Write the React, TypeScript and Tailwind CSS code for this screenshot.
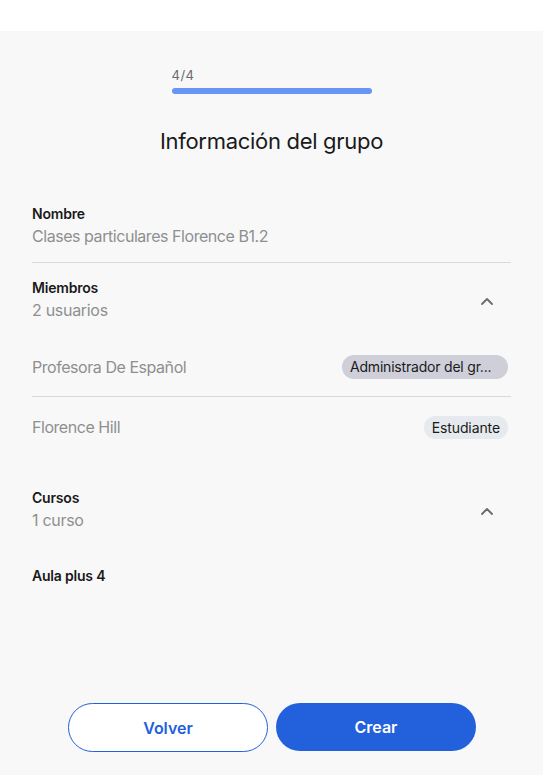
import React from "react";

function Chevron() {
  return (
    <svg width="14" height="10" viewBox="0 0 14 10" fill="none" className="text-[#6b6b6b]">
      <path d="M2 8 L7 3 L12 8" stroke="currentColor" strokeWidth="1.8" strokeLinecap="round" strokeLinejoin="round" />
    </svg>
  );
}

export default function App() {
  const font = { fontFamily: "Inter, 'Noto Sans', sans-serif" };
  return (
    <div className="w-[543px] h-[775px] flex flex-col bg-[#f8f8f8] text-[#1a1a1a]" style={font}>
      <div className="h-[31px] bg-white shrink-0" />
      <div className="flex-1 flex flex-col">
        <div className="flex flex-col items-center pt-[35px]">
          <div className="w-[200px]">
            <div className="text-[13px] leading-[18px] text-[#6b6b6b] tracking-[0.5px]">4/4</div>
            <div className="mt-[4px] h-[6px] w-full rounded-full bg-[#6695f7]" />
          </div>
          <h1 className="mt-[32px] text-[22px] leading-[30px] tracking-[-0.3px] text-[#1a1a1a]">Información del grupo</h1>
        </div>

        <div className="px-[32px] pt-[48px]">
          <div className="pb-[14px] border-b border-[#d9d9d9]">
            <div className="text-[14px] leading-[20px] font-semibold tracking-[-0.2px]">Nombre</div>
            <div className="text-[16px] leading-[24px] text-[#8f8f8f] tracking-[-0.45px]">Clases particulares Florence B1.2</div>
          </div>

          <div className="pt-[15px] flex items-center justify-between">
            <div>
              <div className="text-[14px] leading-[20px] font-semibold tracking-[-0.2px]">Miembros</div>
              <div className="text-[16px] leading-[24px] text-[#8f8f8f] tracking-[-0.3px]">2 usuarios</div>
            </div>
            <div className="pr-[17px] pt-[1px]"><Chevron /></div>
          </div>

          <div className="mt-[15px]">
            <div className="h-[60px] flex items-center justify-between border-b border-[#d9d9d9]">
              <span className="text-[16px] text-[#8f8f8f] tracking-[-0.45px]">Profesora De Español</span>
              <span className="mr-[3px] w-[166px] h-[24px] rounded-full bg-[#cfcfda] px-[8px] text-[14px] leading-[24px] text-[#1a1a1a] tracking-[-0.2px] whitespace-nowrap overflow-hidden">Administrador del gr...</span>
            </div>
            <div className="h-[60px] flex items-center justify-between">
              <span className="text-[16px] text-[#8f8f8f] tracking-[-0.45px]">Florence Hill</span>
              <span className="mr-[3px] h-[23px] rounded-full bg-[#e6eaee] px-[8px] text-[14px] leading-[23px] text-[#1a1a1a] tracking-[-0.1px]">Estudiante</span>
            </div>
          </div>

          <div className="pt-[31px] flex items-center justify-between">
            <div>
              <div className="text-[14px] leading-[20px] font-semibold tracking-[-0.2px]">Cursos</div>
              <div className="text-[16px] leading-[24px] text-[#8f8f8f] tracking-[-0.3px]">1 curso</div>
            </div>
            <div className="pr-[17px] pt-[1px]"><Chevron /></div>
          </div>

          <div className="pt-[34px] text-[14px] leading-[20px] font-semibold tracking-[-0.2px]">Aula plus 4</div>
        </div>

        <div className="mt-auto pb-[23px] flex justify-center gap-[8px] pl-[1px]">
          <button className="w-[200px] h-[49px] rounded-full border border-[#2360dc] bg-white text-[#2360dc] text-[16px] font-semibold">Volver</button>
          <button className="w-[200px] h-[48px] rounded-full bg-[#2360dc] text-white text-[16px] font-semibold">Crear</button>
        </div>
      </div>
    </div>
  );
}
